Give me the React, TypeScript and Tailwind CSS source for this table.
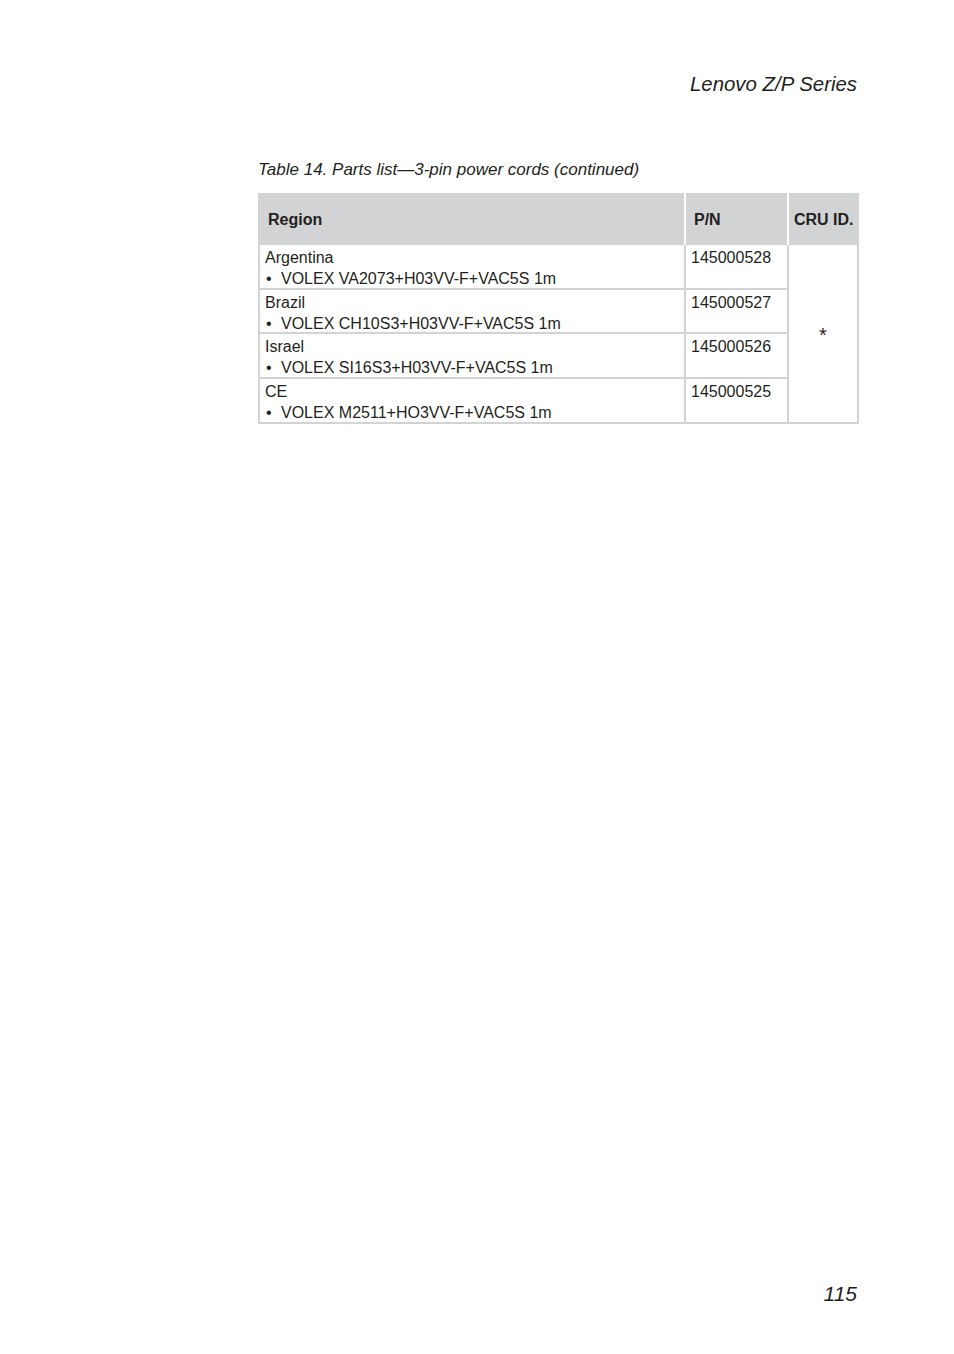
import React from "react";

const rows = [
  { region: "Argentina", cord: "VOLEX VA2073+H03VV-F+VAC5S 1m", pn: "145000528", h: "h-[45px]" },
  { region: "Brazil", cord: "VOLEX CH10S3+H03VV-F+VAC5S 1m", pn: "145000527", h: "h-[44px]" },
  { region: "Israel", cord: "VOLEX SI16S3+H03VV-F+VAC5S 1m", pn: "145000526", h: "h-[45px]" },
  { region: "CE", cord: "VOLEX M2511+HO3VV-F+VAC5S 1m", pn: "145000525", h: "h-[45px]" },
];

export default function App() {
  return (
    <div
      className="w-[954px] h-[1354px] bg-white text-[#231f20] flex flex-col"
      style={{ fontFamily: '"Liberation Sans", Arial, sans-serif' }}
    >
      <div className="pt-[72px] pr-[97px] text-right italic text-[20.4px] leading-[24px]">
        Lenovo Z/P Series
      </div>

      <div className="mt-[64px] ml-[258px] w-[601px]">
        <div className="italic text-[17px] leading-[20px]">
          Table 14. Parts list—3-pin power cords (continued)
        </div>

        <div className="mt-[13px]">
          {/* header */}
          <div className="flex h-[52px] font-bold text-[16px] leading-[20px]">
            <div className="w-[426px] bg-[#d1d3d4] flex items-center pt-[2px] pl-[10px]">Region</div>
            <div className="w-[2px] bg-white" />
            <div className="w-[101px] bg-[#d1d3d4] flex items-center pt-[2px] pl-[8px]">P/N</div>
            <div className="w-[2px] bg-white" />
            <div className="w-[70px] bg-[#d1d3d4] flex items-center pt-[2px] pl-[5px]">CRU ID.</div>
          </div>

          {/* body */}
          <div className="flex text-[16px] leading-[21px]">
            <div className="w-[426px] border-l-2 border-[#d1d3d4] flex flex-col">
              {rows.map((r) => (
                <div key={r.region} className={`${r.h} border-b-2 border-[#d1d3d4] pl-[5px] pt-[2px]`}>
                  <div>{r.region}</div>
                  <div className="flex">
                    <span className="w-[16px] pl-[1px]">•</span>
                    <span>{r.cord}</span>
                  </div>
                </div>
              ))}
            </div>
            <div className="w-[103px] border-l-2 border-[#d1d3d4] flex flex-col">
              {rows.map((r) => (
                <div key={r.pn} className={`${r.h} border-b-2 border-[#d1d3d4] pl-[5px] pt-[2px]`}>
                  {r.pn}
                </div>
              ))}
            </div>
            <div className="w-[72px] border-l-2 border-r-2 border-b-2 border-[#d1d3d4] flex items-center justify-center text-[20px] pt-[4px]">
              *
            </div>
          </div>
        </div>
      </div>

      <div className="mt-auto pb-[48px] pr-[97px] text-right italic text-[21px] leading-[24px]">
        115
      </div>
    </div>
  );
}
